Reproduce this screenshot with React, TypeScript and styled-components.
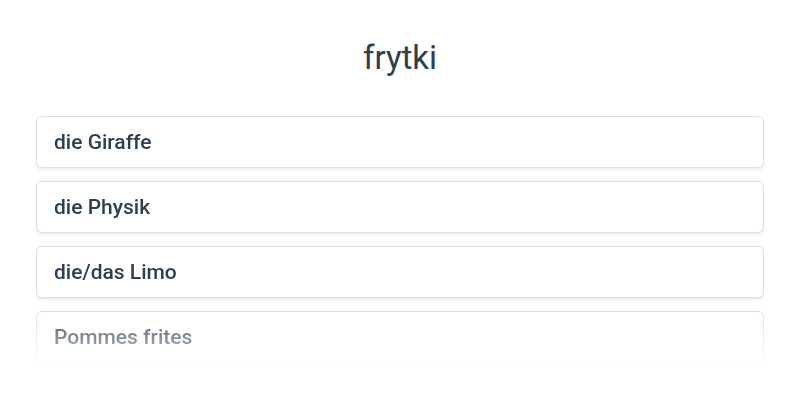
import React from "react";
import styled, { createGlobalStyle } from "styled-components";

const GlobalStyle = createGlobalStyle`
  html, body {
    margin: 0;
    padding: 0;
    background: #ffffff;
    font-family: Roboto, "Noto Sans", sans-serif;
  }
`;

const Page = styled.div`
  width: 800px;
  height: 400px;
  box-sizing: border-box;
  padding: 38px 36px 0;
  overflow: hidden;
`;

const Title = styled.h1`
  margin: 0 0 38px;
  text-align: center;
  font-size: 33px;
  font-weight: 400;
  line-height: 40px;
  color: #2c3e50;
`;

const List = styled.div`
  display: flex;
  flex-direction: column;
  gap: 13px;
  height: 250px;
  padding: 0 0 0;
  overflow: hidden;
  -webkit-mask-image: linear-gradient(to bottom, #000 0, #000 190px, rgba(0, 0, 0, 0.5) 228px, rgba(0, 0, 0, 0) 250px);
  mask-image: linear-gradient(to bottom, #000 0, #000 190px, rgba(0, 0, 0, 0.5) 228px, rgba(0, 0, 0, 0) 250px);
`;

const Card = styled.div`
  flex: 0 0 auto;
  height: 52px;
  box-sizing: border-box;
  display: flex;
  align-items: center;
  padding: 0 17px;
  border: 1px solid #e0e0e0;
  border-radius: 6px;
  background: #fff;
  box-shadow: 0 1px 4px rgba(0, 0, 0, 0.1);
  font-size: 21px;
  font-weight: 500;
  color: #2c3e50;
`;

const words = ["die Giraffe", "die Physik", "die/das Limo", "Pommes frites"];

export default function App() {
  return (
    <>
      <GlobalStyle />
      <Page>
        <Title>frytki</Title>
        <List>
          {words.map((w) => (
            <Card key={w}>{w}</Card>
          ))}
        </List>
      </Page>
    </>
  );
}
